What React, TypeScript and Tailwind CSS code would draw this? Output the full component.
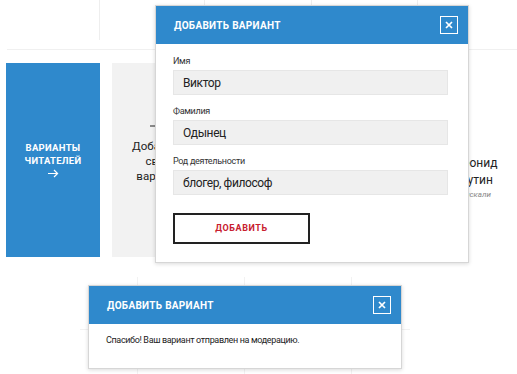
import React from "react"

function CloseBox() {
  return (
    <button className="flex h-[18px] w-[18px] items-center justify-center border border-white">
      <svg width="8" height="8" viewBox="0 0 8 8">
        <path d="M1 1L7 7M7 1L1 7" stroke="#fff" strokeWidth="1.7" />
      </svg>
    </button>
  )
}

function ModalHeader() {
  return (
    <div className="flex h-[38px] items-center justify-between bg-[#2f89cc] pl-[18px] pr-[10px]">
      <h2 className="text-[10px] font-bold uppercase tracking-[0.3px] text-white">
        Добавить вариант
      </h2>
      <CloseBox />
    </div>
  )
}

function Field({ label, value }: { label: string; value: string }) {
  return (
    <div>
      <div className="mb-[3px] text-[9px] leading-[12px] tracking-[-0.3px] text-[#333]">{label}</div>
      <div className="flex h-[25px] w-[275px] items-center border border-[#e6e6e6] bg-[#f0f0f0] px-[9px] text-[12px] tracking-[-0.4px] text-[#222]">
        {value}
      </div>
    </div>
  )
}

export default function App() {
  return (
    <div className="relative h-[374px] w-[517px] overflow-hidden bg-white font-['Roboto',sans-serif] text-[#222]">
      {/* page with open form */}
      <section className="relative h-[270px]">
        <div className="ml-[7px] flex h-[50px] border-b border-[#f0f0f0]">
          <div className="h-[40px] w-[93px] border-r border-[#eeeeee]" />
          <div className="h-[40px] w-[105px] border-r border-[#eeeeee]" />
          <div className="h-[40px] w-[107px] border-r border-[#eeeeee]" />
          <div className="h-[40px] w-[106px] border-r border-[#eeeeee]" />
        </div>

        <div className="mt-[13px] flex gap-[12px] pl-[6px]">
          <div className="flex h-[194px] w-[94px] shrink-0 flex-col items-center justify-center bg-[#2f89cc] text-white">
            <div className="text-center text-[9.5px] font-bold uppercase leading-[12.5px] tracking-[0.3px]">
              Варианты
              <br />
              читателей
            </div>
            <svg width="11" height="9" viewBox="0 0 11 9" className="mt-[2px]">
              <path d="M0 4.5H10M6 1L9.6 4.5L6 8" stroke="#fff" strokeWidth="1.2" fill="none" />
            </svg>
          </div>

          <div className="flex h-[194px] w-[93px] shrink-0 flex-col items-center bg-[#f2f2f2] pt-[54px] text-center">
            <svg width="18" height="18" viewBox="0 0 18 18">
              <path d="M9 0V18M0 9H18" stroke="#222" strokeWidth="1.2" />
            </svg>
            <div className="mt-[4px] text-[11.5px] leading-[15px] text-[#222]">
              Добавить
              <br />
              свой
              <br />
              вариант
            </div>
          </div>

          <div className="h-[194px] w-[94px] shrink-0" />
          <div className="h-[194px] w-[94px] shrink-0" />

          <div className="flex h-[194px] w-[94px] shrink-0 flex-col items-center pt-[92px] text-center">
            <div className="text-[12px] leading-[17px] text-[#222]">
              Леонид
              <br />
              Путин
            </div>
            <div className="self-end whitespace-nowrap pr-[32px] text-[8px] italic text-[#888]">
              по версии искали
            </div>
          </div>
        </div>

        {/* modal: form */}
        <div className="absolute left-[155px] top-[5px] w-[314px] border border-[#d6d6d6] bg-white shadow-[0_1px_4px_rgba(0,0,0,0.15)]">
          <ModalHeader />
          <div className="flex flex-col gap-[10px] px-[17px] pt-[11px]">
            <Field label="Имя" value="Виктор" />
            <Field label="Фамилия" value="Одынец" />
            <Field label="Род деятельности" value="блогер, философ" />
          </div>
          <div className="px-[17px] pb-[18px] pt-[18px]">
            <button className="h-[31px] w-[137px] border-2 border-[#222] bg-white text-[9px] font-bold uppercase tracking-[0.6px] text-[#c8202f]">
              Добавить
            </button>
          </div>
        </div>
      </section>

      {/* page with confirmation */}
      <section className="relative h-[104px] pt-[7px]">
        <div className="ml-[80px] grid w-[330px] grid-cols-[58px_107px_107px_58px] grid-rows-[53px_44px]">
          <div className="border-b border-r border-[#f2f2f2]" />
          <div className="border-b border-r border-[#f2f2f2]" />
          <div className="border-b border-r border-[#f2f2f2]" />
          <div className="border-b border-[#f2f2f2]" />
          <div className="border-r border-[#f2f2f2]" />
          <div className="border-r border-[#f2f2f2]" />
          <div className="border-r border-[#f2f2f2]" />
          <div />
        </div>

        <div className="absolute left-[88px] top-[15px] w-[314px] border border-[#d6d6d6] bg-white shadow-[0_1px_4px_rgba(0,0,0,0.15)]">
          <ModalHeader />
          <p className="h-[44px] px-[17px] pt-[10px] text-[9px] leading-[12px] tracking-[-0.35px] text-[#222]">
            Спасибо! Ваш вариант отправлен на модерацию.
          </p>
        </div>
      </section>
    </div>
  )
}
